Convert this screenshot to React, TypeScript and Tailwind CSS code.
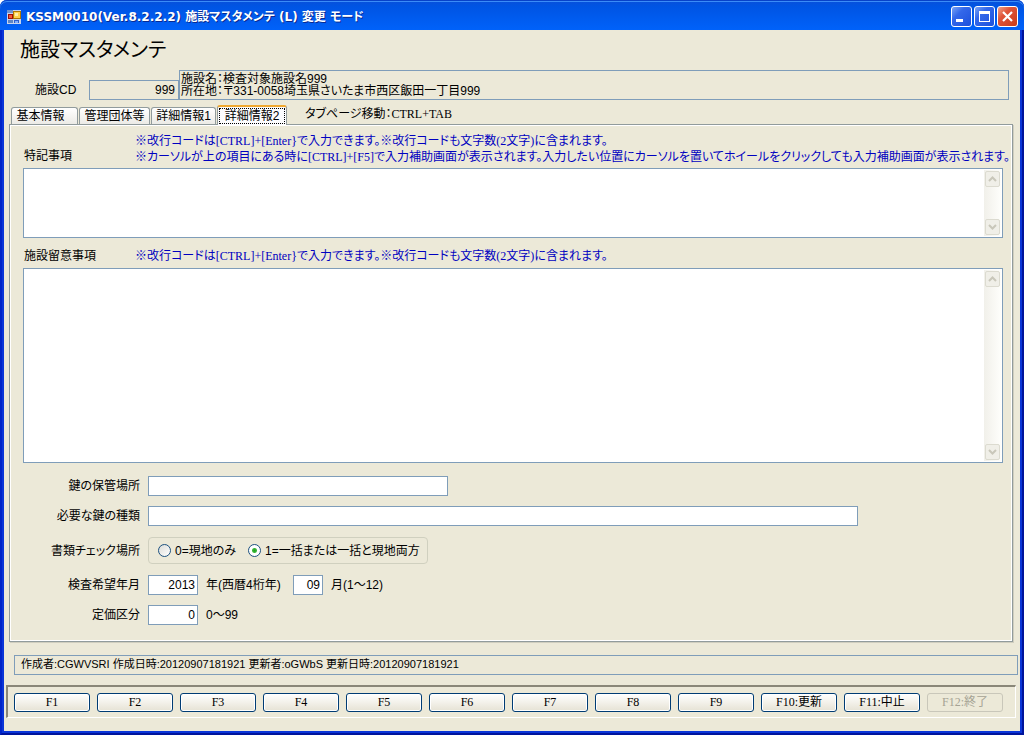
import type { ReactNode } from "react";

const GOTHIC = "font-['Liberation_Sans','Noto_Sans_CJK_JP',sans-serif]";
const MINCHO = "font-['Liberation_Serif','Noto_Sans_CJK_JP',serif]";

const tabs = ["基本情報", "管理団体等", "詳細情報1", "詳細情報2"];
const tabWidths = ["w-[67px] pr-2", "w-[71px]", "w-[65px]", "w-[70px]"];

const newlineNote = "※改行コードは[CTRL]+[Enter}で入力できます。※改行コードも文字数(2文字)に含まれます。";
const assistNote =
  "※カーソルが上の項目にある時に[CTRL]+[F5]で入力補助画面が表示されます。入力したい位置にカーソルを置いてホイールをクリックしても入力補助画面が表示されます。";

const functionKeys = [
  "F1", "F2", "F3", "F4", "F5", "F6", "F7", "F8", "F9", "F10:更新", "F11:中止", "F12:終了",
];

function AppIcon() {
  return (
    <svg width="14" height="14" viewBox="0 0 14 14" shapeRendering="crispEdges" aria-hidden="true">
      <rect width="14" height="14" fill="#c8d4ec" />
      <rect x="0" y="0" width="6" height="3" fill="#6d93cf" />
      <rect x="1" y="4" width="5" height="5" fill="#a01008" />
      <rect x="2" y="5" width="3" height="3" fill="#f05a38" />
      <rect x="6" y="1" width="8" height="8" fill="#b07800" />
      <rect x="7" y="2" width="6" height="6" fill="#ffd24a" />
      <rect x="8" y="3" width="3" height="3" fill="#fff0a8" />
      <rect x="1" y="10" width="5" height="3" fill="#5f86c4" />
      <rect x="7" y="10" width="5" height="3" fill="#2c5fd0" />
      <rect x="8" y="11" width="3" height="2" fill="#7fb0ff" />
    </svg>
  );
}

function CaptionButton({ label, close, children }: { label: string; close?: boolean; children: ReactNode }) {
  return (
    <button
      type="button"
      aria-label={label}
      className={
        "flex size-[21px] items-center justify-center rounded-[3px] border border-white " +
        (close
          ? "bg-linear-to-br from-[#f0a088] via-[#e0553a] via-35% to-[#c83c18]"
          : "bg-linear-to-br from-[#7ba2f4] via-[#3468ea] via-35% to-[#1c50dc]")
      }
    >
      <svg width="19" height="19" viewBox="0 0 19 19" aria-hidden="true">
        {children}
      </svg>
    </button>
  );
}

function TitleBar() {
  return (
    <header className="flex h-[30px] shrink-0 items-center gap-[5px] rounded-t-[7px] bg-linear-to-b from-[#0a50d8] via-[#0054e3] via-20% to-[#0062fa] pr-[6px] pl-[7px] pt-[3px] shadow-[inset_0_1px_#0842c8,inset_0_2px_#3a8cf8]">
      <AppIcon />
      <span className="grow text-[12px] leading-4 font-bold whitespace-nowrap text-white [font-feature-settings:'palt'] [text-shadow:1px_1px_#0a2a90] font-['DejaVu_Sans','Noto_Sans_CJK_JP',sans-serif]">
        KSSM0010(Ver.8.2.2.2) 施設マスタメンテ (L) 変更 モード
      </span>
      <div className="flex gap-[2px]">
        <CaptionButton label="最小化">
          <rect x="4" y="12" width="7" height="3" fill="#fff" />
        </CaptionButton>
        <CaptionButton label="最大化">
          <path d="M4 4h11v11H4z M5 7v7h9V7z" fill="#fff" fillRule="evenodd" />
        </CaptionButton>
        <CaptionButton label="閉じる" close>
          <path d="M5 5l9 9M14 5l-9 9" stroke="#fff" strokeWidth="2.2" />
        </CaptionButton>
      </div>
    </header>
  );
}

function ScrollArrow({ down }: { down?: boolean }) {
  return (
    <button
      type="button"
      disabled
      aria-label={down ? "下へスクロール" : "上へスクロール"}
      className="flex h-4 w-[15px] items-center justify-center rounded-[2px] border border-[#dcdbd0] bg-[#f0efe8]"
    >
      <svg width="9" height="6" viewBox="0 0 9 6" aria-hidden="true">
        <path d={down ? "M1 1l3.5 3.5L8 1" : "M1 5l3.5-3.5L8 5"} fill="none" stroke="#c9c7ba" strokeWidth="2" />
      </svg>
    </button>
  );
}

function MemoBox({ id, size }: { id: string; size: string }) {
  return (
    <div className={"flex border border-[#7f9db9] bg-white p-px " + size}>
      <textarea id={id} className="grow resize-none overflow-hidden px-1 text-[12px] outline-none" />
      <div className="flex w-[17px] flex-col items-center justify-between bg-linear-to-r from-[#f1f0ea] to-[#fefefb] py-px">
        <ScrollArrow />
        <ScrollArrow down />
      </div>
    </div>
  );
}

function Field({ id, label, children }: { id: string; label: string; children: ReactNode }) {
  return (
    <div className="flex h-5 items-center gap-2">
      <label htmlFor={id} className="w-[117px] shrink-0 text-right">
        {label}
      </label>
      {children}
    </div>
  );
}

const inputBase = "h-5 border border-[#7f9db9] bg-white px-[2px] outline-none";

function Note({ children }: { children: ReactNode }) {
  return <p className={"whitespace-nowrap text-[#0000c0] " + MINCHO}>{children}</p>;
}

function TabPanel() {
  return (
    <main className="mr-[7px] ml-[5px] border border-[#919b9c] pt-2 pr-[9px] pb-4 pl-[13px] shadow-[inset_1px_1px_#fff,inset_-1px_-1px_#fff,1px_1px_#d0cebf]">
      <div className="flex h-[35px] pl-px">
        <label htmlFor="remarks" className="w-[111px] shrink-0 pt-[15px]">
          特記事項
        </label>
        <div>
          <Note>{newlineNote}</Note>
          <Note>{assistNote}</Note>
        </div>
      </div>
      <MemoBox id="remarks" size="h-[70px]" />
      <div className="flex h-[30px] pt-[10px] pl-px">
        <label htmlFor="cautions" className="w-[111px] shrink-0">
          施設留意事項
        </label>
        <Note>{newlineNote}</Note>
      </div>
      <MemoBox id="cautions" size="h-[195px]" />

      <div className="flex flex-col gap-[10px] pt-[13px]">
        <Field id="key-place" label="鍵の保管場所">
          <input id="key-place" type="text" className={inputBase + " w-[300px]"} />
        </Field>
        <Field id="key-kind" label="必要な鍵の種類">
          <input id="key-kind" type="text" className={inputBase + " w-[710px]"} />
        </Field>
        <div className="flex h-[29px] items-center gap-2">
          <span id="check-place" className="w-[117px] shrink-0 text-right">
            書類チェック場所
          </span>
          <div
            role="radiogroup"
            aria-labelledby="check-place"
            className="flex h-[27px] w-[280px] items-center gap-3 rounded-[4px] border border-[#d0d0bf] pl-[9px]"
          >
            {["0=現地のみ", "1=一括または一括と現地両方"].map((text, i) => (
              <label key={text} className="flex items-center gap-1 whitespace-nowrap">
                <input
                  type="radio"
                  name="check-place"
                  defaultChecked={i === 1}
                  className="size-[13px] appearance-none rounded-full border border-[#1c5180] bg-linear-to-br from-[#dcdcd7] to-white checked:bg-[radial-gradient(circle,#21a121_0,#3bb83b_2px,#fff_3px)]"
                />
                {text}
              </label>
            ))}
          </div>
        </div>
        <Field id="year" label="検査希望年月">
          <input id="year" type="text" defaultValue="2013" className={inputBase + " w-[50px] text-right"} />
          <span className="w-[79px]">年(西暦4桁年)</span>
          <input aria-label="月" type="text" defaultValue="09" className={inputBase + " w-[30px] text-right"} />
          <span>月(1～12)</span>
        </Field>
        <Field id="price" label="定価区分">
          <input id="price" type="text" defaultValue="0" className={inputBase + " w-[50px] text-right"} />
          <span>0～99</span>
        </Field>
      </div>
    </main>
  );
}

export default function App() {
  return (
    <div className={"flex min-h-screen flex-col rounded-t-[7px] bg-[#0a35d8] text-[12px] leading-4 text-black [font-feature-settings:'palt'] " + GOTHIC}>
      <TitleBar />
      <div className="flex grow flex-col border-x-2 border-b-2 border-l-[#0024c8] border-r-[#00149c] border-b-[#00149c] px-[2px] pb-[2px]">
        <div className="flex grow flex-col bg-[#ece9d8]">
          <h1 className={"px-4 pt-[6px] text-[20px] leading-7 " + MINCHO}>施設マスタメンテ</h1>

          <div className="mt-[6px] mr-[11px] flex items-end">
            <label htmlFor="facility-cd" className="w-[85px] pb-[2px] pl-[31px]">
              施設CD
            </label>
            <input
              id="facility-cd"
              type="text"
              readOnly
              defaultValue="999"
              className="h-5 w-[90px] border border-[#7f9db9] bg-transparent px-[3px] text-right outline-none"
            />
            <div className="h-[30px] grow border border-[#7f9db9] px-px pt-[2px] leading-3">
              <p>施設名：検査対象施設名999</p>
              <p>所在地：〒331-0058埼玉県さいたま市西区飯田一丁目999</p>
            </div>
          </div>

          <div className="relative z-10 -mb-px flex h-[25px] items-end pl-[7px]">
            <div role="tablist" className="flex items-end">
              {tabs.map((tab, i) => {
                const active = i === 3;
                return (
                  <button
                    key={tab}
                    type="button"
                    role="tab"
                    aria-selected={active}
                    className={
                      "rounded-t-[3px] border-x whitespace-nowrap " +
                      tabWidths[i] +
                      (active
                        ? " h-5 border-t-2 border-[#919b9c] border-t-[#f0a830] bg-[#fcfcfe] px-px"
                        : " mr-px mb-px h-[17px] border-t border-[#919b9c] bg-linear-to-b from-white to-[#ecebe6]")
                    }
                  >
                    <span className={active ? "block h-4 border border-dotted border-black leading-[14px]" : "block leading-4"}>
                      {tab}
                    </span>
                  </button>
                );
              })}
            </div>
            <p className={"pb-[3px] pl-[18px] " + MINCHO}>タブページ移動：CTRL+TAB</p>
          </div>

          <TabPanel />

          <footer className="mt-auto pb-[13px]">
            <p className="mr-[2px] ml-[10px] h-5 border border-[#7f9db9] px-[6px] text-[11px] leading-4">
              作成者:CGWVSRI 作成日時:20120907181921 更新者:oGWbS 更新日時:20120907181921
            </p>
            <div
              className={
                "mt-[10px] mr-1 ml-[2px] flex h-[33px] items-center gap-[7px] border-t-2 border-r border-b border-l-2 border-t-[#8a8778] border-l-[#8a8778] border-r-white border-b-white pr-3 pl-[6px] " +
                MINCHO
              }
            >
              {functionKeys.map((key) => (
                <button
                  key={key}
                  type="button"
                  disabled={key.startsWith("F12")}
                  className="h-[19px] flex-1 rounded-[3px] border border-[#003c74] bg-linear-to-b from-white via-[#f3f1ea] to-[#e6e2d4] leading-4 whitespace-nowrap shadow-[inset_0_0_0_1px_#fff] disabled:border-[#c9c7ba] disabled:bg-none disabled:text-[#a5a394] disabled:shadow-none"
                >
                  {key}
                </button>
              ))}
            </div>
          </footer>
        </div>
      </div>
    </div>
  );
}
